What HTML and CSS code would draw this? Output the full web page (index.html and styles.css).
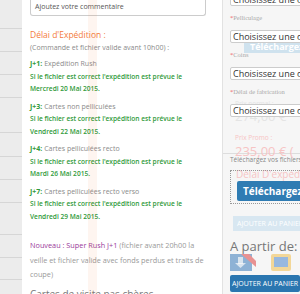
FILE: index.html
```html
<!DOCTYPE html>
<html lang="fr">
<head>
    <meta charset="UTF-8">
    <meta name="viewport" content="width=device-width, initial-scale=1.0">
    <link rel="stylesheet" href="styles.css">
    <title>Cartes de visite</title>
</head>
<body>
    <div class="page">
        <div class="rail">
            <div class="rail-row" style="height: 29px"></div>
            <div class="rail-row" style="height: 23px"></div>
            <div class="rail-row" style="height: 23px"></div>
            <div class="rail-row" style="height: 23px"></div>
            <div class="rail-row" style="height: 35px"></div>
            <div class="rail-row" style="height: 24px"></div>
            <div class="rail-row" style="height: 23px"></div>
            <div class="rail-row" style="height: 23px"></div>
            <div class="rail-row" style="height: 32px"></div>
            <div class="rail-row" style="height: 23px"></div>
            <div class="rail-row" style="height: 22px"></div>
        </div>

        <div class="main">
            <div class="comment">Ajoutez votre commentaire</div>

            <h3 class="delay-title">Délai d'Expédition :</h3>
            <p class="delay-sub">(Commande et fichier valide avant 10h00) :</p>

            <div class="delay">
                <p><b>J+1:</b> Expédition Rush</p>
                <p class="ok">Si le fichier est correct l'expédition est prévue le</p>
                <p class="ok">Mercredi 20 Mai 2015.</p>
            </div>
            <div class="delay">
                <p><b>J+3:</b> Cartes non pelliculées</p>
                <p class="ok">Si le fichier est correct l'expédition est prévue le</p>
                <p class="ok">Vendredi 22 Mai 2015.</p>
            </div>
            <div class="delay">
                <p><b>J+4:</b> Cartes pelliculées recto</p>
                <p class="ok">Si le fichier est correct l'expédition est prévue le</p>
                <p class="ok">Mardi 26 Mai 2015.</p>
            </div>
            <div class="delay">
                <p><b>J+7:</b> Cartes pelliculées recto verso</p>
                <p class="ok">Si le fichier est correct l'expédition est prévue le</p>
                <p class="ok">Vendredi 29 Mai 2015.</p>
            </div>

            <p class="rush"><span>Nouveau : Super Rush J+1</span> (fichier avant 20h00 la veille et fichier valide avec fonds perdus et traits de coupe)</p>

            <h4 class="cheap">Cartes de visite pas chères</h4>

            <div class="ghost-stripe"></div>
        </div>

        <div class="panel">
            <div class="ghost ghost-upload">Téléchargez</div>
            <div class="ghost ghost-old">Prix normal :<br><span>274,00 €</span></div>
            <div class="ghost ghost-promo">Prix Promo :<br><span>235,00 € (</span></div>
            <div class="ghost ghost-delay">Délai D'expédi</div>
            <div class="ghost ghost-cart">AJOUTER AU PANIER</div>

            <div class="select first">Choisissez une option</div>
            <label><i>*</i>Pelliculage</label>
            <div class="select">Choisissez une option</div>
            <label><i>*</i>Coins</label>
            <div class="select">Choisissez une option</div>
            <label><i>*</i>Délai de fabrication</label>
            <div class="select">Choisissez une option</div>

            <div class="upload">
                <p>Téléchargez vos fichiers</p>
                <div class="dropzone">
                    <span class="upload-btn">Téléchargez</span>
                </div>
            </div>

            <div class="buy">
                <p class="from">A partir de: 235,00 €</p>
                <div class="files">
                    <svg width="26" height="17" viewBox="0 0 26 17">
                        <rect x="0" y="0" width="22" height="17" fill="#4a86c0"/>
                        <rect x="8" y="3" width="5" height="7" fill="#fff" opacity="0.7"/>
                        <polygon points="5,9 16,9 10.5,14" fill="#fff" opacity="0.7"/>
                        <polygon points="11,0 19,0 26,7 26,13" fill="#e05050"/>
                    </svg>
                    <svg width="22" height="17" viewBox="0 0 22 17">
                        <rect x="1" y="0" width="20" height="17" rx="2" fill="#f2c45a"/>
                        <rect x="4" y="3" width="14" height="10" fill="#5b8fd0"/>
                    </svg>
                </div>
                <span class="cart-btn">AJOUTER AU PANIER</span>
            </div>
        </div>
    </div>
</body>
</html>
```

FILE: styles.css
```css
body {
    margin: 0;
    padding: 0;
    font-family: 'Open Sans', 'DejaVu Sans', sans-serif;
    background-color: #fff;
    overflow: hidden;
}

.page {
    display: flex;
    width: 300px;
    height: 294px;
    overflow: hidden;
}

/* bande grise de gauche */
.rail {
    width: 22px;
    flex-shrink: 0;
    background-color: #ececec;
    display: flex;
    flex-direction: column;
}

.rail-row {
    box-sizing: border-box;
    border-bottom: 1px solid #d6d6d6;
}

/* colonne principale */
.main {
    position: relative;
    width: 200px;
    flex-shrink: 0;
    padding-left: 8px;
    box-sizing: border-box;
}

.comment {
    width: 176px;
    height: 16px;
    box-sizing: border-box;
    border: 1px solid #ccc;
    border-top: none;
    border-radius: 0 0 3px 3px;
    font-size: 7px;
    line-height: 14px;
    color: #555;
    padding-left: 4px;
}

.delay-title {
    margin: 12px 0 0 0;
    font-size: 8.5px;
    font-weight: normal;
    color: #f47b3c;
    line-height: 14px;
}

.delay-sub {
    margin: 0 0 4px 0;
    font-size: 7px;
    color: #8a8a8a;
    line-height: 12px;
}

.delay {
    margin-bottom: 5px;
}

.delay p {
    margin: 0;
    font-size: 7px;
    line-height: 12.5px;
    color: #8a8a8a;
    white-space: nowrap;
}

.delay b {
    color: #2f9a3a;
}

.delay .ok {
    color: #2f9a3a;
    font-weight: 600;
    font-size: 6.6px;
}

.rush {
    margin: 15px 0 0 0;
    width: 182px;
    font-size: 7.3px;
    line-height: 14.5px;
    color: #999;
}

.rush span {
    color: #9a3a9a;
}

.cheap {
    margin: 5px 0 0 0;
    font-size: 10px;
    font-weight: normal;
    color: #777;
    white-space: nowrap;
}

.ghost-stripe {
    position: absolute;
    top: 0;
    left: 66px;
    width: 9px;
    height: 294px;
    background-color: #f47b3c;
    opacity: 0.08;
}

/* panneau de droite */
.panel {
    position: relative;
    flex: 1;
    border-left: 1px solid #e2e2e2;
    background-color: #f6f6f6;
    padding-left: 7px;
    overflow: hidden;
}

.select {
    width: 90px;
    height: 13px;
    box-sizing: border-box;
    border: 1px solid #ccc;
    border-radius: 2px;
    background-color: #fff;
    font-size: 9px;
    line-height: 11px;
    color: #333;
    padding-left: 2px;
    white-space: nowrap;
    position: relative;
}

.select.first {
    margin-top: -7px;
}

label {
    display: block;
    font-family: 'Liberation Serif', serif;
    font-size: 6.5px;
    color: #aaa;
    line-height: 24px;
}

label i {
    font-style: normal;
    color: #e66;
}

.upload {
    margin-top: 36px;
    margin-left: -7px;
    padding-left: 7px;
    border-top: 1px solid #ddd;
}

.upload p {
    margin: 0;
    font-size: 6.5px;
    color: #888;
    line-height: 11px;
    white-space: nowrap;
}

.dropzone {
    position: relative;
    margin-top: 5px;
    width: 90px;
    height: 34px;
    box-sizing: border-box;
    border: 1px dotted #999;
    padding: 7px 0 0 6px;
}

.upload-btn {
    display: inline-block;
    background-color: #2f7cb3;
    color: #fff;
    font-weight: bold;
    font-size: 10px;
    padding: 3px 6px;
    border-radius: 2px;
    white-space: nowrap;
}

.buy {
    margin-top: 34px;
}

.from {
    margin: 0;
    font-size: 13px;
    color: #777;
    line-height: 16px;
    white-space: nowrap;
}

.files {
    display: flex;
    gap: 14px;
    margin-top: 0;
    opacity: 0.6;
    height: 15px;
}

.cart-btn {
    position: relative;
    display: inline-block;
    background-color: #2a76b0;
    color: #fff;
    font-size: 7px;
    padding: 4px 2px;
    border-radius: 2px;
    white-space: nowrap;
}

/* images fantomes de la capture */
.ghost {
    position: absolute;
    white-space: nowrap;
}

.ghost-upload {
    top: 40px;
    left: 21px;
    width: 70px;
    height: 13px;
    background-color: #cfe2ee;
    color: #fff;
    font-weight: bold;
    font-size: 9px;
    line-height: 13px;
    padding-left: 6px;
}

.ghost-old {
    top: 99px;
    left: 12px;
    font-size: 6.5px;
    color: #e4e4e4;
    line-height: 9px;
}

.ghost-old span,
.ghost-promo span {
    font-size: 13px;
    line-height: 16px;
}

.ghost-promo {
    top: 133px;
    left: 12px;
    font-size: 6.5px;
    color: #f6c4c4;
    line-height: 10px;
}

.ghost-delay {
    top: 167px;
    left: 13px;
    font-size: 10px;
    color: #f6c4c4;
}

.ghost-cart {
    top: 216px;
    left: 10px;
    width: 80px;
    height: 15px;
    background-color: #d8e7f1;
    color: #fff;
    font-size: 7px;
    line-height: 15px;
    padding-left: 4px;
}
```
